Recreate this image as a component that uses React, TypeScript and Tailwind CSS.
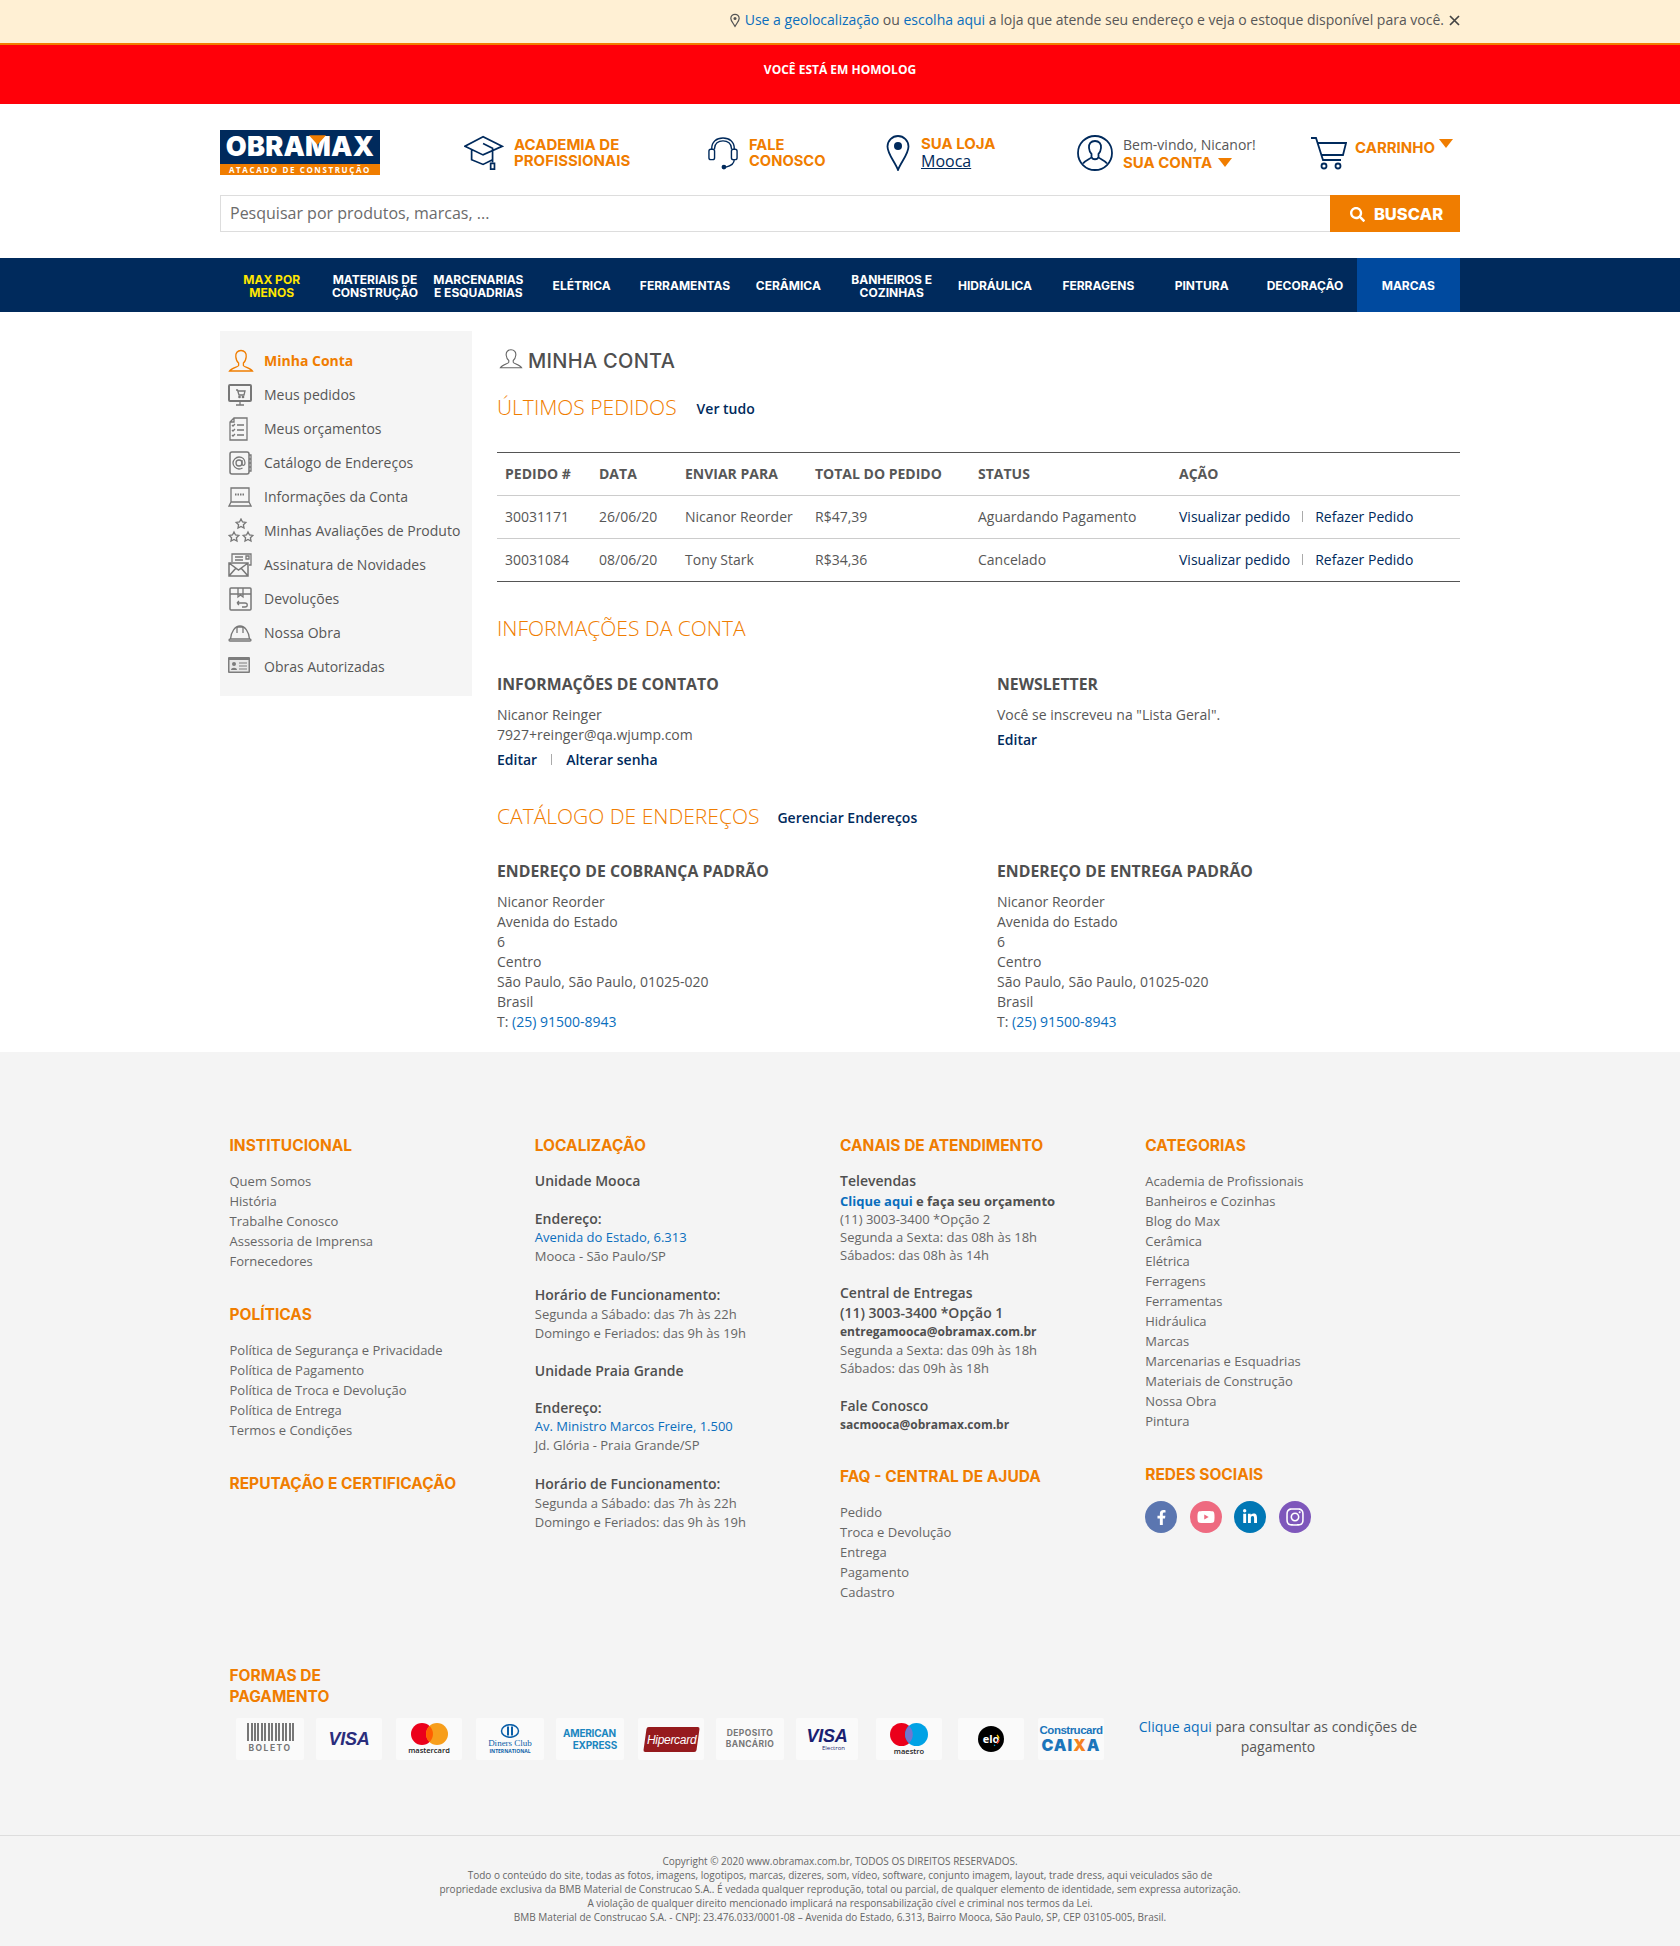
import React from 'react';
import { FaFacebookF, FaYoutube, FaLinkedinIn, FaInstagram, FaSearch } from 'react-icons/fa';

const navy = '#002a5c';

const navItems = [
  ['MAX POR', 'MENOS'],
  ['MATERIAIS DE', 'CONSTRUÇÃO'],
  ['MARCENARIAS', 'E ESQUADRIAS'],
  ['ELÉTRICA'],
  ['FERRAMENTAS'],
  ['CERÂMICA'],
  ['BANHEIROS E', 'COZINHAS'],
  ['HIDRÁULICA'],
  ['FERRAGENS'],
  ['PINTURA'],
  ['DECORAÇÃO'],
  ['MARCAS'],
];

const Caret = ({ className }: { className: string }) => (
  <svg viewBox="0 0 14 9" className={className}>
    <path d="M0 0h14L7 9z" fill="#f07d00" />
  </svg>
);

// icones do menu lateral
const SideIcon = ({ name, active }: { name: string; active?: boolean }) => {
  const stroke = active ? '#f07d00' : '#777';
  const common = { fill: 'none', stroke, strokeWidth: 1.3 };
  switch (name) {
    case 'user':
      return (
        <svg viewBox="0 0 26 24" className="w-[26px] h-[24px]" {...common}>
          <path d="M13 1.500c-3.600 0-5.600 2.600-5.200 6.400.3 2.700 1.300 5 2.800 6.100v2.400c0 1.200-7.400 3-9.100 5.600h23c-1.700-2.600-9.100-4.400-9.100-5.600V14c1.500-1.100 2.500-3.400 2.800-6.100.4-3.800-1.600-6.400-5.200-6.400z" />
        </svg>
      );
    case 'cart':
      return (
        <svg viewBox="0 0 24 22" className="w-[24px] h-[22px]" {...common}>
          <rect x="1" y="1" width="22" height="16" rx="1" strokeWidth="2" />
          <path d="M8 21h8M12 17v4M8 6h1.500l1.500 5h5l1-4h-7" />
          <circle cx="11.500" cy="13" r=".7" />
          <circle cx="15" cy="13" r=".7" />
        </svg>
      );
    case 'list':
      return (
        <svg viewBox="0 0 20 24" className="w-[20px] h-[24px]" {...common}>
          <path d="M6 1h13v22H2V5zM6 1v4H2" />
          <path d="M9 8h7M9 13h7M9 18h7M4 8l1 1 2-2M4 13l1 1 2-2M4 18l1 1 2-2" />
        </svg>
      );
    case 'at':
      return (
        <svg viewBox="0 0 24 24" className="w-[24px] h-[24px]" {...common}>
          <rect x="2" y="1" width="19" height="22" rx="2" strokeWidth="1.500" />
          <path d="M21 4h2v16h-2M21 8h2M21 12h2M21 16h2" />
          <circle cx="11" cy="12" r="3" />
          <path d="M14 9v4c0 2 3 2 3-1 0-4-3-6-6-6s-6 3-6 6 3 6 6 6c1.500 0 2.500-.3 3.500-1" />
        </svg>
      );
    case 'laptop':
      return (
        <svg viewBox="0 0 24 20" className="w-[24px] h-[20px]" {...common}>
          <path d="M3 1h18v14H3zM3 15l-2 4h22l-2-4" />
          <path d="M7 7.500h10" strokeWidth="2" strokeDasharray="1.500 1" />
        </svg>
      );
    case 'stars':
      return (
        <svg viewBox="0 0 26 26" className="w-[26px] h-[26px]" {...common}>
          <path d="M13 1l1.500 3 3.300.4-2.400 2.300.6 3.300-3-1.600-3 1.600.6-3.300-2.400-2.300 3.300-.4z" />
          <path d="M6 14l1.500 3 3.300.4-2.400 2.300.6 3.300-3-1.600-3 1.600.6-3.300L1.200 17.400 4.500 17z" />
          <path d="M20 14l1.500 3 3.300.4-2.400 2.300.6 3.300-3-1.600-3 1.600.6-3.300-2.400-2.300 3.300-.4z" />
        </svg>
      );
    case 'mail':
      return (
        <svg viewBox="0 0 24 24" className="w-[24px] h-[24px]" {...common}>
          <path d="M4 9V1h19v11h-2M7 4h8M7 7h8M18 3h3v3h-3z" />
          <path d="M1 10h19v13H1zM1 10l9.500 7 9.500-7M1 23l7-8M20 23l-7-8" strokeWidth="1.500" />
        </svg>
      );
    case 'box':
      return (
        <svg viewBox="0 0 24 24" className="w-[24px] h-[24px]" {...common}>
          <rect x="2" y="1" width="21" height="22" rx="1" strokeWidth="1.500" />
          <path d="M2 7h21M10 1v9l2.500-2 2.500 2V1M9 16h8c3 0 3 4 0 4h-3M9 16l2-2M9 16l2 2" />
        </svg>
      );
    case 'helmet':
      return (
        <svg viewBox="0 0 24 18" className="w-[24px] h-[18px]" {...common}>
          <path d="M1 16c0-1 1-1 1.500-1C3 8 7 2 12 2s9 6 9.500 13c.5 0 1.500 0 1.500 1s-.5 1-1 1H2c-.5 0-1 0-1-1zM2.500 15h19" />
          <path d="M9 3v6M15 3v6M9 3h6" />
        </svg>
      );
    default:
      return (
        <svg viewBox="0 0 22 16" className="w-[22px] h-[16px] mb-[4px]">
          <rect x="0" y="0" width="22" height="16" rx="1" fill="#7d7d7d" />
          <rect x="1.500" y="3" width="19" height="11.500" fill="#e8e8e8" />
          <circle cx="6" cy="7" r="2" fill="#7d7d7d" />
          <path d="M3 13c0-3 6-3 6 0z" fill="#7d7d7d" />
          <path d="M11 6h8M11 9h8M11 12h8" stroke="#7d7d7d" strokeWidth="1" />
        </svg>
      );
  }
};

const sideItems = [
  ['user', 'Minha Conta'],
  ['cart', 'Meus pedidos'],
  ['list', 'Meus orçamentos'],
  ['at', 'Catálogo de Endereços'],
  ['laptop', 'Informações da Conta'],
  ['stars', 'Minhas Avaliações de Produto'],
  ['mail', 'Assinatura de Novidades'],
  ['box', 'Devoluções'],
  ['helmet', 'Nossa Obra'],
  ['card', 'Obras Autorizadas'],
];

const orders = [
  ['30031171', '26/06/20', 'Nicanor Reorder', 'R$47,39', 'Aguardando Pagamento'],
  ['30031084', '08/06/20', 'Tony Stark', 'R$34,36', 'Cancelado'],
];

const addressLines = ['Nicanor Reorder', 'Avenida do Estado', '6', 'Centro', 'São Paulo, São Paulo, 01025-020', 'Brasil'];

const FooterHeading = ({ children }: { children: React.ReactNode }) => (
  <h3 className="font-['Inter',sans-serif] font-bold text-[15.500px] leading-[24px] text-[#f07d00] h-[24px] whitespace-nowrap">{children}</h3>
);

const FooterLinks = ({ items }: { items: string[] }) => (
  <ul className="mt-[13px] text-[13px] leading-[20px] text-[#666]">
    {items.map((t) => (
      <li key={t} className="h-[20px] whitespace-nowrap">{t}</li>
    ))}
  </ul>
);

const Card = ({ children, className }: { children: React.ReactNode; className: string }) => (
  <div className={`h-[42px] bg-[#fafafa] rounded-[2px] flex flex-col items-center justify-center shrink-0 ${className}`}>{children}</div>
);

const AddressBlock = ({ title }: { title: string }) => (
  <div className="w-[500px] shrink-0">
    <h3 className="text-[15.800px] leading-[24px] font-bold text-[#4f4f4f]">{title}</h3>
    <div className="mt-[9px]">
      {addressLines.map((l, i) => (
        <p key={i} className="h-[20px]">{l}</p>
      ))}
      <p className="h-[20px]">T: <a className="text-[#0a6ebd]">(25) 91500-8943</a></p>
    </div>
  </div>
);

export default function App() {
  return (
    <div className="font-['Open_Sans',sans-serif] text-[14px] leading-[20px] text-[#575757] bg-white min-h-[1946px]">
      {/* aviso de geolocalizacao */}
      <div className="h-[45px] bg-[#fff0d4] border-b-2 border-[#f07d00] flex items-center justify-end pr-[220px] pb-[3px]">
        <svg viewBox="0 0 12 16" className="w-[10px] h-[15px] mr-[5px]" fill="none" stroke="#555" strokeWidth="1.500">
          <path d="M6 15C3 10 1 8 1 5.500a5 5 0 0 1 10 0C11 8 9 10 6 15z" />
          <circle cx="6" cy="5.500" r="1.800" fill="#555" stroke="none" />
        </svg>
        <span className="whitespace-nowrap">
          <a className="text-[#0a6ebd]">Use a geolocalização</a> ou <a className="text-[#0a6ebd]">escolha aqui</a> a loja que atende seu endereço e veja o estoque disponível para você.
        </span>
        <svg viewBox="0 0 11 11" className="w-[11px] h-[11px] ml-[5px]" stroke="#444" strokeWidth="1.700">
          <path d="M1 1l9 9M10 1l-9 9" />
        </svg>
      </div>
      <div className="h-[59px] bg-[#ff0009] flex justify-center pt-[15px]">
        <span className="text-white font-bold text-[12px] leading-[20px]">VOCÊ ESTÁ EM HOMOLOG</span>
      </div>

      {/* cabecalho */}
      <header className="w-[1240px] mx-auto h-[154px] pt-[26px]">
        <div className="flex h-[65px] items-start relative">
          <div className="w-[160px] h-[45px] flex flex-col shrink-0">
            <div className="h-[34px] bg-[#002a5c] relative flex items-center justify-center overflow-hidden">
              <span className="font-['Inter',sans-serif] font-black text-white text-[27px] leading-[34px] tracking-[0.2px]">OBRAMAX</span>
              <svg viewBox="0 0 18 10" className="absolute left-[89px] top-[5px] w-[17px] h-[10px]">
                <path d="M0 0h18L9 10z" fill="#f07d00" />
              </svg>
            </div>
            <div className="h-[11px] bg-[#f07d00] text-white font-bold text-[8px] leading-[11px] tracking-[1.600px] text-center whitespace-nowrap">ATACADO DE CONSTRUÇÃO</div>
          </div>

          <div className="ml-[84px] flex items-center h-[36px] mt-[5px] w-[245px]">
            <svg viewBox="0 0 42 36" className="w-[40px] h-[36px]" fill="none" stroke={navy} strokeWidth="1.800">
              <path d="M20 1L1 11l19 9 20-9zM8 15v10l12 5 10-5M20 8l10 5v15" />
              <path d="M28 29h4v6h-4z" />
            </svg>
            <div className="ml-[10px] font-['Inter',sans-serif] font-bold text-[15px] leading-[16px] text-[#f07d00] whitespace-nowrap">ACADEMIA DE<br />PROFISSIONAIS</div>
          </div>

          <div className="ml-[-1px] flex items-center h-[36px] mt-[5px] w-[178px]">
            <svg viewBox="0 0 32 35" className="w-[30px] h-[35px]" fill="none" stroke={navy} strokeWidth="1.500">
              <path d="M4 13v-1C4 5 9 1 16 1s12 4 12 11v1M7 13v-1c0-5 4-8 9-8s9 3 9 8v1" />
              <rect x="1" y="13" width="6" height="11" rx="2" />
              <rect x="25" y="13" width="6" height="11" rx="2" />
              <path d="M28 24c0 5-4 7-9 8" />
              <circle cx="17" cy="32" r="1.800" fill={navy} />
            </svg>
            <div className="ml-[11px] font-['Inter',sans-serif] font-bold text-[14.700px] leading-[16px] text-[#f07d00] whitespace-nowrap">FALE<br />CONOSCO</div>
          </div>

          <div className="flex items-center h-[36px] mt-[5px] w-[191px]">
            <svg viewBox="0 0 24 36" className="w-[24px] h-[36px]" fill="none" stroke={navy} strokeWidth="1.800">
              <path d="M12 35C9 27 1.500 19 1.500 11.500a10.500 10.500 0 0 1 21 0C22.500 19 15 27 12 35z" />
              <circle cx="12" cy="11" r="4" fill={navy} stroke="none" />
            </svg>
            <div className="ml-[11px] leading-[16px] whitespace-nowrap">
              <div className="font-['Inter',sans-serif] font-bold text-[15px] text-[#f07d00]">SUA LOJA</div>
              <div className="text-[16px] text-[#002a5c] underline leading-[18px]">Mooca</div>
            </div>
          </div>

          <div className="flex items-center h-[36px] mt-[5px] w-[234px]">
            <svg viewBox="0 0 36 36" className="w-[36px] h-[36px]" fill="none" stroke={navy} strokeWidth="1.800">
              <circle cx="18" cy="18" r="17" />
              <path d="M18 6c-4 0-6.500 2.500-6 7 .3 3 1.300 5 2.500 6v3c0 1.500-6 3-8.500 6.500M18 6c4 0 6.500 2.500 6 7-.3 3-1.300 5-2.500 6v3c0 1.500 6 3 8.500 6.500M14.500 22c1 3 6 3 7 0" />
            </svg>
            <div className="ml-[10px] mt-[1px] whitespace-nowrap">
              <div className="leading-[18px]">Bem-vindo, Nicanor!</div>
              <div className="flex items-center font-['Inter',sans-serif] font-bold text-[15px] leading-[18px] text-[#f07d00]">SUA CONTA <Caret className="w-[14px] h-[9px] ml-[6px]" /></div>
            </div>
          </div>

          <div className="flex items-center h-[36px] mt-[5px]">
            <svg viewBox="0 0 36 34" className="w-[36px] h-[34px]" fill="none" stroke={navy} strokeWidth="1.800">
              <path d="M0 2h5l7 22h18M7 7h28l-3 12H11" />
              <circle cx="13" cy="30" r="2.500" />
              <circle cx="27" cy="30" r="2.500" />
            </svg>
            <div className="ml-[8px] mb-[10px] font-['Inter',sans-serif] font-bold text-[15px] text-[#f07d00] whitespace-nowrap flex items-start">CARRINHO <Caret className="w-[14px] h-[9px] ml-[4px] mt-[1px]" /></div>
          </div>
        </div>

        <div className="flex h-[37px]">
          <div className="flex-1 border border-[#ddd] border-r-0 flex items-center pl-[9px] pb-[1px] text-[16px] text-[#6b6b6b]">Pesquisar por produtos, marcas, ...</div>
          <div className="w-[130px] bg-[#f07d00] flex items-center justify-center pt-[1px] pl-[3px] text-white font-['Inter',sans-serif] font-extrabold text-[16.500px]">
            <FaSearch className="w-[15px] h-[15px] mr-[9px]" /> BUSCAR
          </div>
        </div>
      </header>

      {/* menu */}
      <nav className="h-[54px] bg-[#002a5c]">
        <div className="w-[1240px] mx-auto grid grid-cols-12 h-full">
          {navItems.map((lines, i) => (
            <div
              key={lines[0]}
              className={`flex items-center justify-center pt-[3px] text-center font-['Inter',sans-serif] font-bold text-[12px] leading-[12.500px] whitespace-nowrap ${i === 0 ? 'text-[#ffe600]' : 'text-white'} ${i === 11 ? 'bg-[#004a9f]' : ''}`}
            >
              <span>
                {lines.map((l) => (
                  <span key={l} className="block">{l}</span>
                ))}
              </span>
            </div>
          ))}
        </div>
      </nav>

      {/* conteudo */}
      <main className="w-[1240px] mx-auto pt-[19px] flex items-start">
        <aside className="w-[252px] h-[365px] bg-[#f5f5f5] pt-[13px] shrink-0">
          {sideItems.map(([icon, label], i) => (
            <div key={label} className="h-[34px] flex items-center">
              <div className="w-[44px] pl-[8px] flex items-center">
                <SideIcon name={icon} active={i === 0} />
              </div>
              <span className={i === 0 ? 'font-bold text-[#f07d00]' : ''}>{label}</span>
            </div>
          ))}
        </aside>

        <section className="ml-[25px] w-[963px]">
          <div className="h-[58px] flex items-center pt-[1px]">
            <svg viewBox="0 0 26 22" className="w-[24px] h-[22px] ml-[2px] mb-[3px]" fill="none" stroke="#666" strokeWidth="1.200">
              <path d="M13 1c-3.600 0-5.600 2.600-5.200 6 .3 2.700 1.300 4.500 2.800 5.600v2c0 1.200-7.400 3-9.100 5.900h23c-1.700-2.900-9.100-4.700-9.100-5.900v-2c1.500-1.100 2.500-2.900 2.800-5.600.4-3.400-1.600-6-5.200-6z" />
            </svg>
            <h1 className="ml-[5px] font-['Inter',sans-serif] font-medium text-[20px] tracking-[0.3px] text-[#4f4f4f]">MINHA CONTA</h1>
          </div>
          <div className="h-[36px] flex items-center">
            <h2 className="text-[21px] font-light text-[#f07d00] mb-[1px]">ÚLTIMOS PEDIDOS</h2>
            <a className="ml-[20px] mt-[3px] font-[550] text-[#002a5c]">Ver tudo</a>
          </div>

          <table className="mt-[27px] w-full table-fixed border-t border-b border-[#555] text-left">
            <colgroup>
              <col className="w-[94px]" />
              <col className="w-[86px]" />
              <col className="w-[130px]" />
              <col className="w-[163px]" />
              <col className="w-[201px]" />
              <col />
            </colgroup>
            <thead>
              <tr className="h-[43px] font-bold">
                <th className="pl-[8px]">PEDIDO #</th>
                <th className="pl-[8px]">DATA</th>
                <th className="pl-[8px]">ENVIAR PARA</th>
                <th className="pl-[8px]">TOTAL DO PEDIDO</th>
                <th className="pl-[8px]">STATUS</th>
                <th className="pl-[8px]">AÇÃO</th>
              </tr>
            </thead>
            <tbody>
              {orders.map((o) => (
                <tr key={o[0]} className="h-[43px] border-t border-[#ccc]">
                  {o.map((c) => (
                    <td key={c} className="pl-[8px]">{c}</td>
                  ))}
                  <td className="pl-[8px] whitespace-nowrap text-[#002a5c]">
                    Visualizar pedido<span className="inline-block w-px h-[11px] bg-[#aaa] mx-[12px]" />Refazer Pedido
                  </td>
                </tr>
              ))}
            </tbody>
          </table>

          <h2 className="mt-[28px] h-[36px] leading-[36px] text-[21px] font-light text-[#f07d00]">INFORMAÇÕES DA CONTA</h2>
          <div className="mt-[26px] flex">
            <div className="w-[500px] shrink-0">
              <h3 className="text-[15.800px] leading-[24px] font-bold text-[#4f4f4f]">INFORMAÇÕES DE CONTATO</h3>
              <p className="mt-[9px]">Nicanor Reinger</p>
              <p>7927+reinger@qa.wjump.com</p>
              <p className="mt-[5px] font-[550] text-[#002a5c]">
                Editar<span className="inline-block w-px h-[11px] bg-[#aaa] mx-[14px]" />Alterar senha
              </p>
            </div>
            <div>
              <h3 className="text-[15.800px] leading-[24px] font-bold text-[#4f4f4f]">NEWSLETTER</h3>
              <p className="mt-[9px]">Você se inscreveu na "Lista Geral".</p>
              <p className="mt-[5px] font-[550] text-[#002a5c]">Editar</p>
            </div>
          </div>

          <div className="mt-[28px] h-[36px] flex items-center">
            <h2 className="text-[21px] font-light text-[#f07d00] mb-[1px]">CATÁLOGO DE ENDEREÇOS</h2>
            <a className="ml-[18px] mt-[3px] font-[550] text-[#002a5c]">Gerenciar Endereços</a>
          </div>
          <div className="mt-[25px] flex">
            <AddressBlock title="ENDEREÇO DE COBRANÇA PADRÃO" />
            <AddressBlock title="ENDEREÇO DE ENTREGA PADRÃO" />
          </div>
        </section>
      </main>

      {/* rodape */}
      <footer className="mt-[20px] bg-[#f4f4f4] pt-[82px]">
        <div className="w-[1240px] mx-auto">
          <div className="grid grid-cols-4 w-[1221px] ml-[9.500px] text-[13px]">
            <div>
              <FooterHeading>INSTITUCIONAL</FooterHeading>
              <FooterLinks items={['Quem Somos', 'História', 'Trabalhe Conosco', 'Assessoria de Imprensa', 'Fornecedores']} />
              <div className="mt-[32px]"><FooterHeading>POLÍTICAS</FooterHeading></div>
              <FooterLinks items={['Política de Segurança e Privacidade', 'Política de Pagamento', 'Política de Troca e Devolução', 'Política de Entrega', 'Termos e Condições']} />
              <div className="mt-[32px]"><FooterHeading>REPUTAÇÃO E CERTIFICAÇÃO</FooterHeading></div>
            </div>

            <div className="text-[#666] leading-[19px]">
              <FooterHeading>LOCALIZAÇÃO</FooterHeading>
              <p className="mt-[13px] text-[14px] font-semibold text-[#4f4f4f]">Unidade Mooca</p>
              <p className="mt-[19px] text-[14px] font-semibold text-[#4f4f4f]">Endereço:</p>
              <p className="text-[#0a6ebd]">Avenida do Estado, 6.313</p>
              <p>Mooca - São Paulo/SP</p>
              <p className="mt-[19px] text-[14px] font-semibold text-[#4f4f4f]">Horário de Funcionamento:</p>
              <p className="mt-[1px]">Segunda a Sábado: das 7h às 22h</p>
              <p>Domingo e Feriados: das 9h às 19h</p>
              <p className="mt-[18px] text-[14px] font-semibold text-[#4f4f4f]">Unidade Praia Grande</p>
              <p className="mt-[18px] text-[14px] font-semibold text-[#4f4f4f]">Endereço:</p>
              <p className="text-[#0a6ebd]">Av. Ministro Marcos Freire, 1.500</p>
              <p>Jd. Glória - Praia Grande/SP</p>
              <p className="mt-[19px] text-[14px] font-semibold text-[#4f4f4f]">Horário de Funcionamento:</p>
              <p className="mt-[1px]">Segunda a Sábado: das 7h às 22h</p>
              <p>Domingo e Feriados: das 9h às 19h</p>
            </div>

            <div className="text-[#666] leading-[18px]">
              <FooterHeading>CANAIS DE ATENDIMENTO</FooterHeading>
              <p className="mt-[13px] text-[14px] leading-[20px] font-semibold text-[#4f4f4f]">Televendas</p>
              <p className="text-[13px] leading-[20px] font-bold text-[#4f4f4f]"><a className="text-[#0a6ebd]">Clique aqui</a> e faça seu orçamento</p>
              <p className="-mt-[1px]">(11) 3003-3400 *Opção 2</p>
              <p>Segunda a Sexta: das 08h às 18h</p>
              <p>Sábados: das 08h às 14h</p>
              <p className="mt-[19px] text-[14px] leading-[20px] font-semibold text-[#4f4f4f]">Central de Entregas</p>
              <p className="text-[14px] leading-[20px] font-semibold text-[#4f4f4f]">(11) 3003-3400 *Opção 1</p>
              <p className="text-[12px] font-bold text-[#4f4f4f]">entregamooca@obramax.com.br</p>
              <p>Segunda a Sexta: das 09h às 18h</p>
              <p>Sábados: das 09h às 18h</p>
              <p className="mt-[19px] text-[14px] leading-[20px] font-semibold text-[#4f4f4f]">Fale Conosco</p>
              <p className="text-[12px] font-bold text-[#4f4f4f]">sacmooca@obramax.com.br</p>
              <div className="mt-[31px]"><FooterHeading>FAQ - CENTRAL DE AJUDA</FooterHeading></div>
              <FooterLinks items={['Pedido', 'Troca e Devolução', 'Entrega', 'Pagamento', 'Cadastro']} />
            </div>

            <div>
              <FooterHeading>CATEGORIAS</FooterHeading>
              <FooterLinks items={['Academia de Profissionais', 'Banheiros e Cozinhas', 'Blog do Max', 'Cerâmica', 'Elétrica', 'Ferragens', 'Ferramentas', 'Hidráulica', 'Marcas', 'Marcenarias e Esquadrias', 'Materiais de Construção', 'Nossa Obra', 'Pintura']} />
              <div className="mt-[32px]"><FooterHeading>REDES SOCIAIS</FooterHeading></div>
              <div className="mt-[14px] flex gap-[12.500px] text-white">
                <div className="w-[32px] h-[32px] rounded-full bg-[#5b76b0] flex items-center justify-center"><FaFacebookF className="w-[15px] h-[15px]" /></div>
                <div className="w-[32px] h-[32px] rounded-full bg-[#ee6a80] flex items-center justify-center"><FaYoutube className="w-[18px] h-[18px]" /></div>
                <div className="w-[32px] h-[32px] rounded-full bg-[#0077b5] flex items-center justify-center"><FaLinkedinIn className="w-[16px] h-[16px]" /></div>
                <div className="w-[32px] h-[32px] rounded-full bg-[#7e57bb] flex items-center justify-center"><FaInstagram className="w-[20px] h-[20px]" /></div>
              </div>
            </div>
          </div>

          <div className="ml-[9.500px] mt-[63px]">
            <div className="w-[160px] font-['Inter',sans-serif] font-bold text-[15.500px] leading-[21px] text-[#f07d00]">FORMAS DE PAGAMENTO</div>
            <div className="mt-[11px] ml-[6.500px] h-[42px] flex items-center">
              <Card className="w-[68px]">
                <div className="w-[47px] h-[18px] bg-[repeating-linear-gradient(90deg,#777_0px,#777_2px,#fafafa_2px,#fafafa_3.500px)]" />
                <span className="font-['Inter',sans-serif] font-bold text-[8.500px] leading-[14px] tracking-[1.500px] text-[#777]">BOLETO</span>
              </Card>
              <Card className="w-[66px] ml-[12px]"><span className="font-['Liberation_Sans',sans-serif] italic font-bold text-[18px] tracking-[-0.3px] text-[#2a2d7c]">VISA</span></Card>
              <Card className="w-[66px] ml-[14px]">
                <svg viewBox="0 0 37 22" className="w-[37px] h-[22px]">
                  <circle cx="11" cy="11" r="11" fill="#eb001b" />
                  <circle cx="26" cy="11" r="11" fill="#f79e1b" />
                  <path d="M18.500 3a11 11 0 0 1 0 16 11 11 0 0 1 0-16z" fill="#ff5f00" />
                </svg>
                <span className="font-semibold text-[7.500px] leading-[10px] text-[#222]">mastercard</span>
              </Card>
              <Card className="w-[68px] ml-[14px]">
                <svg viewBox="0 0 20 14" className="w-[20px] h-[14px]">
                  <ellipse cx="10" cy="7" rx="8.500" ry="6.300" fill="none" stroke="#0b5fa8" strokeWidth="1.500" />
                  <path d="M8 2.500v9M12 2.500v9" stroke="#0b5fa8" strokeWidth="2" />
                </svg>
                <span className="font-['Liberation_Serif',serif] text-[9px] leading-[9px] text-[#0b5fa8] mt-[1px]">Diners Club</span>
                <span className="font-bold text-[5px] leading-[6px] text-[#0b5fa8]">INTERNATIONAL</span>
              </Card>
              <Card className="w-[68px] ml-[12px]">
                <span className="font-['Inter',sans-serif] font-bold text-[10px] leading-[12px] tracking-[-0.2px] text-[#1a86c0] self-start ml-[7px]">AMERICAN</span>
                <span className="font-['Inter',sans-serif] font-bold text-[10px] leading-[12px] tracking-[-0.2px] text-[#1a86c0] self-end mr-[7px]">EXPRESS</span>
              </Card>
              <Card className="w-[66px] ml-[14px]">
                <div className="w-[53px] h-[25px] bg-[#961b1e] rounded-[2px] -skew-x-[8deg] flex items-center justify-center">
                  <span className="font-['Liberation_Sans',sans-serif] italic text-[12px] tracking-[-0.3px] text-white skew-x-[8deg]">Hipercard</span>
                </div>
              </Card>
              <Card className="w-[68px] ml-[12px]">
                <span className="font-['Inter',sans-serif] font-bold text-[8.500px] leading-[11px] tracking-[0.4px] text-[#777]">DEPOSITO</span>
                <span className="font-['Inter',sans-serif] font-bold text-[8.500px] leading-[11px] tracking-[0.4px] text-[#777]">BANCÁRIO</span>
              </Card>
              <Card className="w-[62px] ml-[12px]">
                <span className="font-['Liberation_Sans',sans-serif] italic font-bold text-[18px] leading-[18px] tracking-[-0.3px] text-[#1a1f71]">VISA</span>
                <span className="text-[6px] leading-[7px] self-end mr-[13px] text-[#1a1f71]">Electron</span>
              </Card>
              <Card className="w-[66px] ml-[18px]">
                <svg viewBox="0 0 38 23" className="w-[38px] h-[23px]">
                  <circle cx="11.500" cy="11.500" r="11.500" fill="#eb001b" />
                  <circle cx="26.500" cy="11.500" r="11.500" fill="#00a2e5" />
                  <path d="M19 3a11.500 11.500 0 0 1 0 17 11.500 11.500 0 0 1 0-17z" fill="#7375cf" />
                </svg>
                <span className="font-semibold text-[7.500px] leading-[10px] text-[#222]">maestro</span>
              </Card>
              <Card className="w-[66px] ml-[16px]">
                <div className="w-[26px] h-[26px] rounded-full bg-black flex items-center justify-center relative">
                  <span className="text-white font-bold text-[11px] leading-[12px]">elo</span>
                  <svg viewBox="0 0 26 26" className="absolute inset-0 w-[26px] h-[26px]" fill="none" strokeWidth="1.500">
                    <path d="M19 9a7 7 0 0 1 2 3.500" stroke="#ffcb05" />
                    <path d="M21 14a7 7 0 0 1-2 3.500" stroke="#ef4123" />
                    <path d="M17 19l-1 .7" stroke="#00a4e0" />
                  </svg>
                </div>
              </Card>
              <Card className="w-[66px] ml-[14px]">
                <span className="font-['Liberation_Sans',sans-serif] font-bold text-[11.500px] leading-[13px] tracking-[-0.5px] text-[#1b75bb] whitespace-nowrap">Construcard</span>
                <span className="font-['Inter',sans-serif] font-black text-[16px] leading-[17px] tracking-[1px] text-[#1b75bb]">CAI<span className="text-[#f58220]">X</span>A</span>
              </Card>
              <p className="ml-[24px] w-[300px] text-center mb-[4px]"><a className="text-[#0a6ebd]">Clique aqui</a> para consultar as condições de pagamento</p>
            </div>
          </div>
        </div>

        <div className="mt-[75px] border-t border-[#ddd] pt-[18px] pb-[22px] text-center text-[10px] leading-[14px] text-[#666]">
          <p>Copyright © 2020 www.obramax.com.br, TODOS OS DIREITOS RESERVADOS.</p>
          <p>Todo o conteúdo do site, todas as fotos, imagens, logotipos, marcas, dizeres, som, vídeo, software, conjunto imagem, layout, trade dress, aqui veiculados são de</p>
          <p>propriedade exclusiva da BMB Material de Construcao S.A.. É vedada qualquer reprodução, total ou parcial, de qualquer elemento de identidade, sem expressa autorização.</p>
          <p>A violação de qualquer direito mencionado implicará na responsabilização cível e criminal nos termos da Lei.</p>
          <p>BMB Material de Construcao S.A. - CNPJ: 23.476.033/0001-08 – Avenida do Estado, 6.313, Bairro Mooca, São Paulo, SP, CEP 03105-005, Brasil.</p>
        </div>
      </footer>
    </div>
  );
}
